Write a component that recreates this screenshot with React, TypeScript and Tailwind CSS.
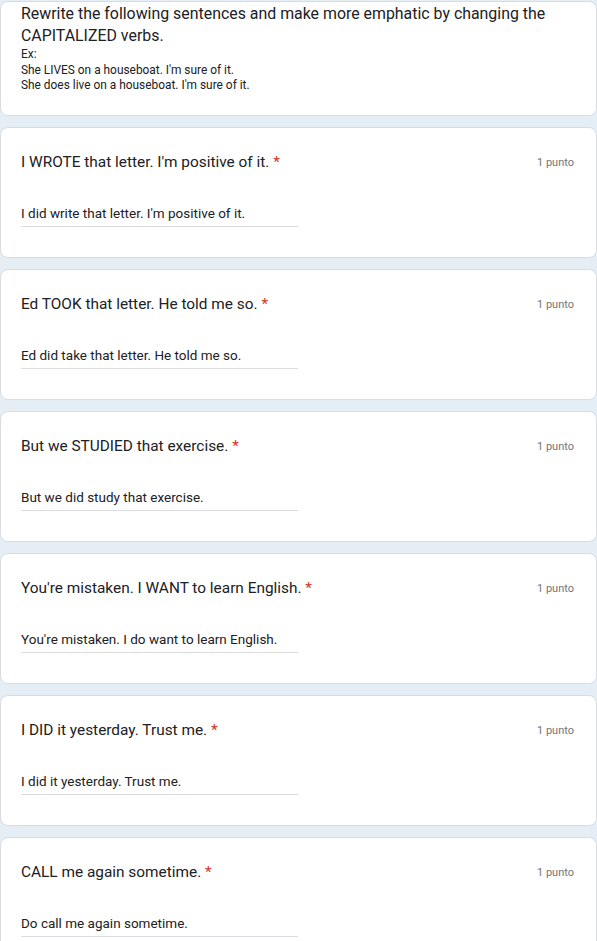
import React from "react";

const items = [
  ["I WROTE that letter. I'm positive of it.", "I did write that letter. I'm positive of it."],
  ["Ed TOOK that letter. He told me so.", "Ed did take that letter. He told me so."],
  ["But we STUDIED that exercise.", "But we did study that exercise."],
  ["You're mistaken. I WANT to learn English.", "You're mistaken. I do want to learn English."],
  ["I DID it yesterday. Trust me.", "I did it yesterday. Trust me."],
  ["CALL me again sometime.", "Do call me again sometime."],
];

export default function App() {
  return (
    <div className="h-[941px] overflow-hidden bg-[#e4eef4] pt-px" style={{ fontFamily: "Roboto, 'Liberation Sans', sans-serif" }}>
      <div className="flex flex-col gap-[11px]">
        <div className="h-[115px] rounded-[8px] border border-[#dadce0] bg-white px-[20px] pt-[1px]">
          <div className="text-[15.9px] leading-[22px] text-[#202124]">
            Rewrite the following sentences and make more emphatic by changing the CAPITALIZED verbs.
          </div>
          <div className="text-[11.9px] leading-[15.5px] text-[#202124]">
            <div>Ex:</div>
            <div>She LIVES on a houseboat. I'm sure of it.</div>
            <div>She does live on a houseboat. I'm sure of it.</div>
          </div>
        </div>
        {items.map(([q, a], i) => (
          <div key={i} className="h-[131px] rounded-[8px] border border-[#dadce0] bg-white px-[20px] pt-[23px]">
            <div className="flex items-start justify-between">
              <div className="text-[15.4px] leading-[22px] text-[#202124]">
                {q} <span className="text-[#d93025]">*</span>
              </div>
              <div className="pt-[4px] pr-[2px] text-[11px] leading-[16px] text-[#70757a]">1 punto</div>
            </div>
            <div className="mt-[31px] w-[277px] border-b border-[#dadce0] pb-[3px] text-[13.5px] leading-[19px] text-[#202124]">
              {a}
            </div>
          </div>
        ))}
      </div>
    </div>
  );
}
